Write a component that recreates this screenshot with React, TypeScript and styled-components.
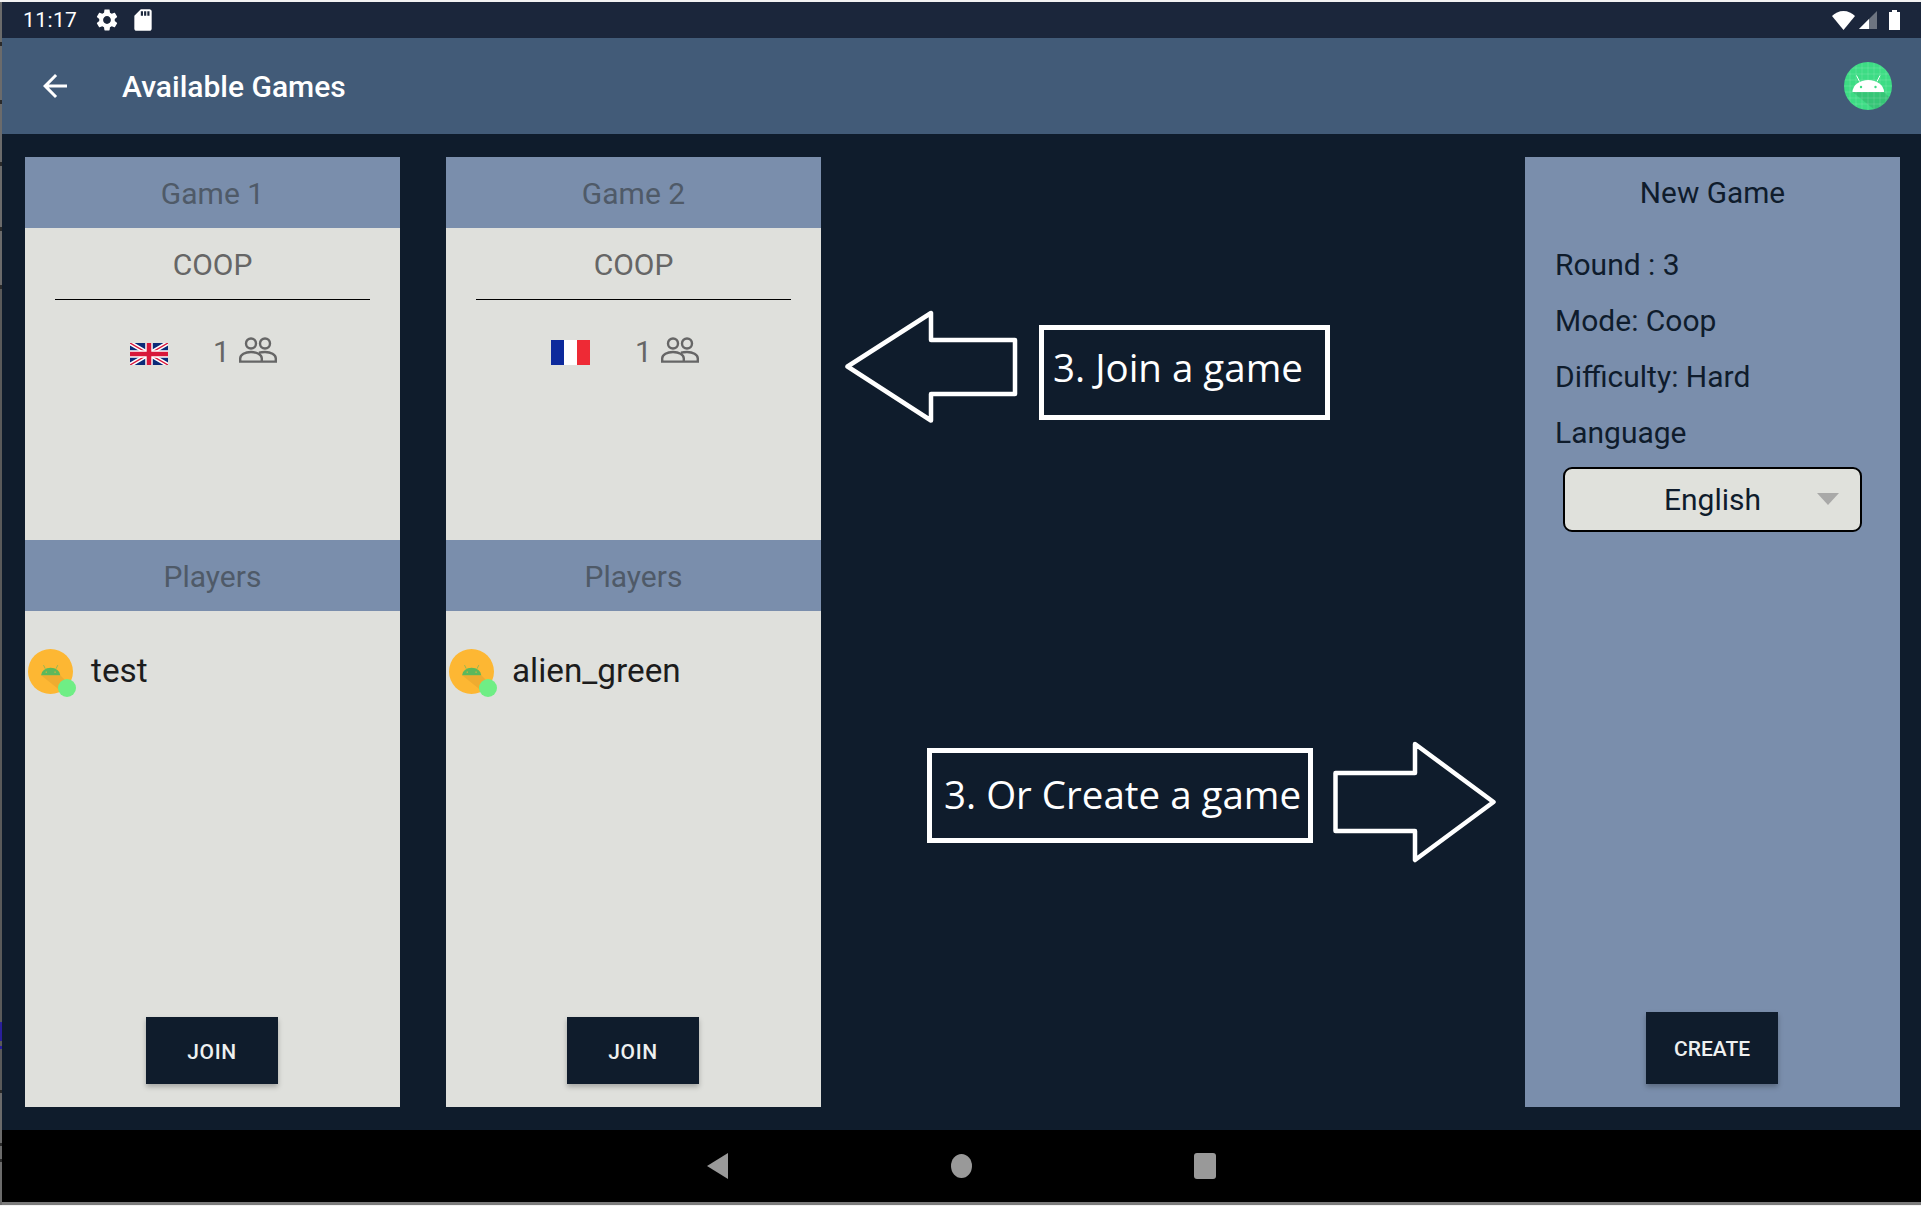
import React from 'react';
import styled, { createGlobalStyle } from 'styled-components';

const Global = createGlobalStyle`
  html, body { margin: 0; padding: 0; background: #f2f2f2; }
  body { font-family: Roboto, "Liberation Sans", sans-serif; }
`;

const Frame = styled.div`
  width: 1921px; height: 1206px; box-sizing: border-box; overflow: hidden; position: relative;
  display: flex; flex-direction: column;
  border-top: 2px solid #f2f2f2; border-bottom: 1px solid #f2f2f2; padding-left: 2px;
  &::before {
    content: ""; position: absolute; left: 0; top: 0; bottom: 0; width: 2px;
    background: linear-gradient(to bottom,
      #6b6b6b 0 40px, #2a2a2a 40px 44px, #6b6b6b 44px 98px, #2a2a2a 98px 102px,
      #6b6b6b 102px 160px, #2a2a2a 160px 164px, #6b6b6b 164px 225px, #2a2a2a 225px 229px,
      #6b6b6b 229px 283px, #2a2a2a 283px 287px, #5a5a5a 287px 1020px, #2a1f9a 1020px 1039px,
      #5a5a5a 1039px 1044px, #2a1f9a 1044px 1047px, #5a5a5a 1047px 1088px, #2a2a2a 1088px 1091px,
      #6b6b6b 1091px 1141px, #2a2a2a 1141px 1144px, #6b6b6b 1144px 1157px, #2a2a2a 1157px 1160px, #6b6b6b 1160px);
  }
`;
const StatusBar = styled.div`
  height: 36px; flex: none; background: #1b263b; color: #fff;
  display: flex; align-items: center; padding: 0 21px 0 21px;
`;
const Time = styled.span`font-size: 21px; letter-spacing: .4px; width: 70px;`;
const StatusSpacer = styled.div`flex: 1;`;
const Svg = styled.svg<{ $ml?: number; $mt?: number }>`
  display: block; flex: none; margin-left: ${p => p.$ml ?? 0}px; margin-top: ${p => p.$mt ?? 0}px;
`;
const AppBar = styled.div`
  height: 96px; flex: none; background: #425b78; color: #fff;
  display: flex; align-items: center; padding: 0 29px 0 35px;
`;
const Title = styled.h1`margin: 1px 0 0 49px; font-size: 30px; font-weight: 500; flex: 1; line-height: 1;`;
const Main = styled.main`
  flex: 1; min-height: 0; background: #0f1c2c; display: flex; padding: 23px 21px 23px 23px;
`;
const Card = styled.section`
  width: 375px; flex: none; background: #dfe0dc; display: flex; flex-direction: column; align-items: stretch;
  & + & { margin-left: 46px; }
`;
const Band = styled.div`
  height: 71px; flex: none; background: #7a8eac; color: #4f5a68; padding-top: 1px; box-sizing: border-box;
  display: flex; align-items: center; justify-content: center; font-size: 30px;
`;
const Mode = styled.div`
  height: 72px; margin: 0 30px; border-bottom: 1.5px solid #000; color: #666; padding-top: 1px;
  display: flex; align-items: center; justify-content: center; font-size: 30px; box-sizing: border-box; flex: none;
`;
const Stats = styled.div`
  height: 240px; flex: none; display: flex; align-items: flex-start; padding: 36px 0 0 105px; box-sizing: border-box;
`;
const Count = styled.span`color: #666; font-size: 30px; line-height: 36px; margin: -2px 0 0 45px;`;
const Players = styled.div`flex: 1; display: flex; flex-direction: column; padding: 38px 0 0 3px;`;
const Player = styled.div`display: flex; align-items: center; font-size: 33.3px; color: #1c1c1c; height: 45px;`;
const PlayerName = styled.span`margin-top: -2px;`;
const AvatarWrap = styled.div`position: relative; width: 45px; height: 45px; flex: none; margin-right: 18px;`;
const OnlineDot = styled.span`
  position: absolute; left: 30px; top: 30px; width: 18px; height: 18px; border-radius: 50%; background: #6fee85;
`;
const ButtonRow = styled.div`display: flex; justify-content: center; flex: none; padding-right: 1px;`;
const ActionButton = styled.button<{ $h: number; $mb: number; $ls?: number }>`
  width: 132px; height: ${p => p.$h}px; margin-bottom: ${p => p.$mb}px; border: 0; padding: 2px 0 0;
  background: #0f1c2c; color: #eef0f0; font: 500 21px Roboto, sans-serif; letter-spacing: ${p => p.$ls ?? 0}px;
  box-shadow: 0 3px 5px rgba(0,0,0,.25);
`;
const Middle = styled.div`flex: 1; display: flex; flex-direction: column; padding-top: 153px;`;
const NoteRow = styled.div<{ $pl: number; $mt: number; $gap: number }>`
  display: flex; align-items: flex-start; padding-left: ${p => p.$pl}px; margin-top: ${p => p.$mt}px; gap: ${p => p.$gap}px;
`;
const NoteBox = styled.div<{ $w: number; $mt: number; $pb: number; $pl: number }>`
  width: ${p => p.$w}px; height: 95px; box-sizing: border-box; margin-top: ${p => p.$mt}px; flex: none;
  border: 5px solid #fff; color: #fff; font-family: "Open Sans", sans-serif; font-size: 38.5px;
  display: flex; align-items: center; padding: 0 0 ${p => p.$pb}px ${p => p.$pl}px; white-space: nowrap;
`;
const NewGame = styled(Card)`background: #7a8eac; margin-left: 0;`;
const NewTitle = styled.div`
  height: 79px; padding-bottom: 9px; box-sizing: border-box; flex: none; color: #0f1c2c;
  display: flex; align-items: center; justify-content: center; font-size: 29.8px;
`;
const Setting = styled.div`
  height: 56px; flex: none; color: #0f1c2c; font-size: 30px; padding-left: 30px; display: flex; align-items: center;
`;
const Select = styled.div`
  height: 65px; width: 299px; box-sizing: border-box; margin: 7px 0 0 38px; position: relative; flex: none;
  background: #e0e1dc; border: 2px solid #000; border-radius: 9px; color: #0f1c2c; font-size: 30px;
  display: flex; align-items: center; justify-content: center;
`;
const Caret = styled.span`
  position: absolute; right: 21px; top: 24px; width: 0; height: 0; filter: blur(.5px);
  border-left: 11px solid transparent; border-right: 11px solid transparent; border-top: 12px solid #a9a9a8;
`;
const Push = styled.div`flex: 1;`;
const NavBar = styled.nav`
  height: 72px; flex: none; background: #000; border-bottom: 3px solid #7b7b7b; box-sizing: content-box;
  display: flex; align-items: center; justify-content: center; gap: 222px;
`;
const NavBack = styled.span`
  width: 0; height: 0; margin-right: 1px;
  border-top: 13px solid transparent; border-bottom: 13px solid transparent; border-right: 21px solid #999;
`;
const NavHome = styled.span`width: 21px; height: 24px; border-radius: 50%; background: #999;`;
const NavSquare = styled.span`width: 22px; height: 26px; border-radius: 3px; background: #999;`;

const Android = ({ size, bg, head, grid, scale = 1, shade = 0.1 }: { size: number; bg: string; head: string; grid?: boolean; scale?: number; shade?: number }) => (
  <Svg width={size} height={size} viewBox="0 0 48 48">
    <defs><clipPath id={`c${size}`}><circle cx="24" cy="24" r="24" /></clipPath></defs>
    <circle cx="24" cy="24" r="24" fill={bg} />
    <g clipPath={`url(#c${size})`}>
      <g transform={`translate(24 24) scale(${scale}) translate(-24 -24)`}>
        <path d="M8.500 30H40L80 70H58z" fill="#000" opacity={shade} />
      </g>
      {grid && [6, 12, 18, 24, 30, 36, 42].map(v => (
        <g key={v} stroke="#fff" strokeWidth=".5" opacity=".28">
          <path d={`M${v} 0V48`} /><path d={`M0 ${v}H48`} />
        </g>
      ))}
    </g>
    <g transform={`translate(24 24) scale(${scale}) translate(-24 -24)`}>
      <path d="M8.500 30a15.750 12 0 0 1 31.500 0z" fill={head} />
      <path d="M15.500 19.500l-3-6M33 19.500l3-6" stroke={head} strokeWidth="1" />
      <circle cx="17" cy="25" r="1.200" fill={bg} /><circle cx="31.500" cy="25" r="1.200" fill={bg} />
    </g>
  </Svg>
);

const Users = () => (
  <Svg $ml={9} $mt={1} width="38" height="26" viewBox="0 0 38 26" fill="none" stroke="#666" strokeWidth="2.4">
    <circle cx="12" cy="6.500" r="5" /><circle cx="26" cy="6.500" r="5" />
    <path d="M1.200 24.600v-3c0-4 5-6.600 10.800-6.600s10.800 2.600 10.800 6.600v3zM20 15.600c1.800-.4 3.800-.6 6-.6 5.800 0 10.800 2.600 10.800 6.600v3H22.800" />
  </Svg>
);

const UkFlag = () => (
  <Svg $mt={7} width="38" height="22" viewBox="0 0 38 22">
    <rect width="38" height="22" fill="#0a2a78" />
    <path d="M0 0L38 22M38 0L0 22" stroke="#fff" strokeWidth="4.500" />
    <path d="M0 0L38 22M38 0L0 22" stroke="#d8173a" strokeWidth="1.400" />
    <path d="M19 0V22M0 11H38" stroke="#fff" strokeWidth="7.500" />
    <path d="M19 0V22M0 11H38" stroke="#d8173a" strokeWidth="4.600" />
  </Svg>
);
const FrFlag = () => (
  <Svg $mt={4} width="39" height="25" viewBox="0 0 39 25">
    <rect width="13" height="25" fill="#0d2a9c" /><rect x="13" width="13" height="25" fill="#fff" /><rect x="26" width="13" height="25" fill="#ee2a35" />
  </Svg>
);

const GameCard = ({ name, flag, player }: { name: string; flag: React.ReactNode; player: string }) => (
  <Card>
    <Band>{name}</Band>
    <Mode>COOP</Mode>
    <Stats>{flag}<Count>1</Count><Users /></Stats>
    <Band>Players</Band>
    <Players>
      <Player>
        <AvatarWrap><Android size={45} bg="#fdb733" head="#5cb85c" scale={0.65} shade={0.06} /><OnlineDot /></AvatarWrap>
        <PlayerName>{player}</PlayerName>
      </Player>
    </Players>
    <ButtonRow><ActionButton $h={67} $mb={23} $ls={0.6}>JOIN</ActionButton></ButtonRow>
  </Card>
);

export default function App() {
  return (
    <Frame>
      <Global />
      <StatusBar>
        <Time>11:17</Time>
        <Svg $ml={1} width="26" height="26" viewBox="0 0 24 24" fill="#fff"><path d="M19.14 12.94c.04-.3.06-.61.06-.94 0-.32-.02-.64-.07-.94l2.03-1.58c.18-.14.23-.41.12-.61l-1.92-3.32c-.12-.22-.37-.29-.59-.22l-2.39.96c-.5-.38-1.03-.7-1.62-.94l-.36-2.54c-.04-.24-.24-.41-.48-.41h-3.84c-.24 0-.43.17-.47.41l-.36 2.54c-.59.24-1.13.57-1.62.94l-2.39-.96c-.22-.08-.47 0-.59.22L2.74 8.87c-.12.21-.08.47.12.61l2.03 1.58c-.05.3-.09.63-.09.94s.02.64.07.94l-2.03 1.58c-.18.14-.23.41-.12.61l1.92 3.32c.12.22.37.29.59.22l2.39-.96c.5.38 1.03.7 1.62.94l.36 2.54c.05.24.24.41.48.41h3.84c.24 0 .44-.17.47-.41l.36-2.54c.59-.24 1.13-.56 1.62-.94l2.39.96c.22.08.47 0 .59-.22l1.92-3.32c.12-.22.07-.47-.12-.61l-2.01-1.58zM12 15.600c-1.980 0-3.600-1.620-3.600-3.600s1.620-3.600 3.600-3.600 3.600 1.620 3.600 3.600-1.620 3.600-3.600 3.600z" /></Svg>
        <Svg $ml={10} width="26" height="26" viewBox="0 0 24 24" fill="#fff"><path d="M18 2h-8L4.020 8 4 20c0 1.100.9 2 2 2h12c1.100 0 2-.9 2-2V4c0-1.100-.9-2-2-2zm-6 6h-2V4h2v4zm3 0h-2V4h2v4zm3 0h-2V4h2v4z" /></Svg>
        <StatusSpacer />
        <Svg width="23" height="19" viewBox="0 0 23 19" fill="#fff"><path d="M11.500 19L0 5C3 2 7 0 11.500 0S20 2 23 5z" /></Svg>
        <Svg $ml={4} width="18" height="18" viewBox="0 0 18 18"><path d="M18 0V18H0z" fill="#6d7480" /><path d="M10 8V18H0z" fill="#fff" /></Svg>
        <Svg $ml={12} width="11" height="20" viewBox="0 0 11 20" fill="#fff"><path d="M3 0h5v2h3v18H0V2h3z" /></Svg>
      </StatusBar>
      <AppBar>
        <Svg width="36" height="36" viewBox="0 0 24 24" fill="#fff"><path d="M20 11H7.830l5.590-5.590L12 4l-8 8 8 8 1.410-1.410L7.830 13H20v-2z" /></Svg>
        <Title>Available Games</Title>
        <Android size={48} bg="#3ddc84" head="#fff" grid />
      </AppBar>
      <Main>
        <GameCard name="Game 1" flag={<UkFlag />} player="test" />
        <GameCard name="Game 2" flag={<FrFlag />} player="alien_green" />
        <Middle>
          <NoteRow $pl={24} $mt={0} $gap={21}>
            <Svg width="173" height="113" viewBox="0 0 173 113" fill="none" stroke="#fff" strokeWidth="4.500" strokeLinejoin="round">
              <path d="M2.500 56.500L86 3V30H170V84H86V110.500z" />
            </Svg>
            <NoteBox $w={291} $mt={15} $pb={12} $pl={9}>3. Join a game</NoteBox>
          </NoteRow>
          <NoteRow $pl={106} $mt={318} $gap={20}>
            <NoteBox $w={386} $mt={7} $pb={3} $pl={12}>3. Or Create a game</NoteBox>
            <Svg width="163" height="122" viewBox="0 0 163 122" fill="none" stroke="#fff" strokeWidth="4.500" strokeLinejoin="round">
              <path d="M2.500 32H82V3L160.500 61L82 119V90H2.500z" />
            </Svg>
          </NoteRow>
        </Middle>
        <NewGame>
          <NewTitle>New Game</NewTitle>
          <Setting>Round : 3</Setting>
          <Setting>Mode: Coop</Setting>
          <Setting>Difficulty: Hard</Setting>
          <Setting>Language</Setting>
          <Select>English<Caret /></Select>
          <Push />
          <ButtonRow><ActionButton $h={72} $mb={23}>CREATE</ActionButton></ButtonRow>
        </NewGame>
      </Main>
      <NavBar><NavBack /><NavHome /><NavSquare /></NavBar>
    </Frame>
  );
}
